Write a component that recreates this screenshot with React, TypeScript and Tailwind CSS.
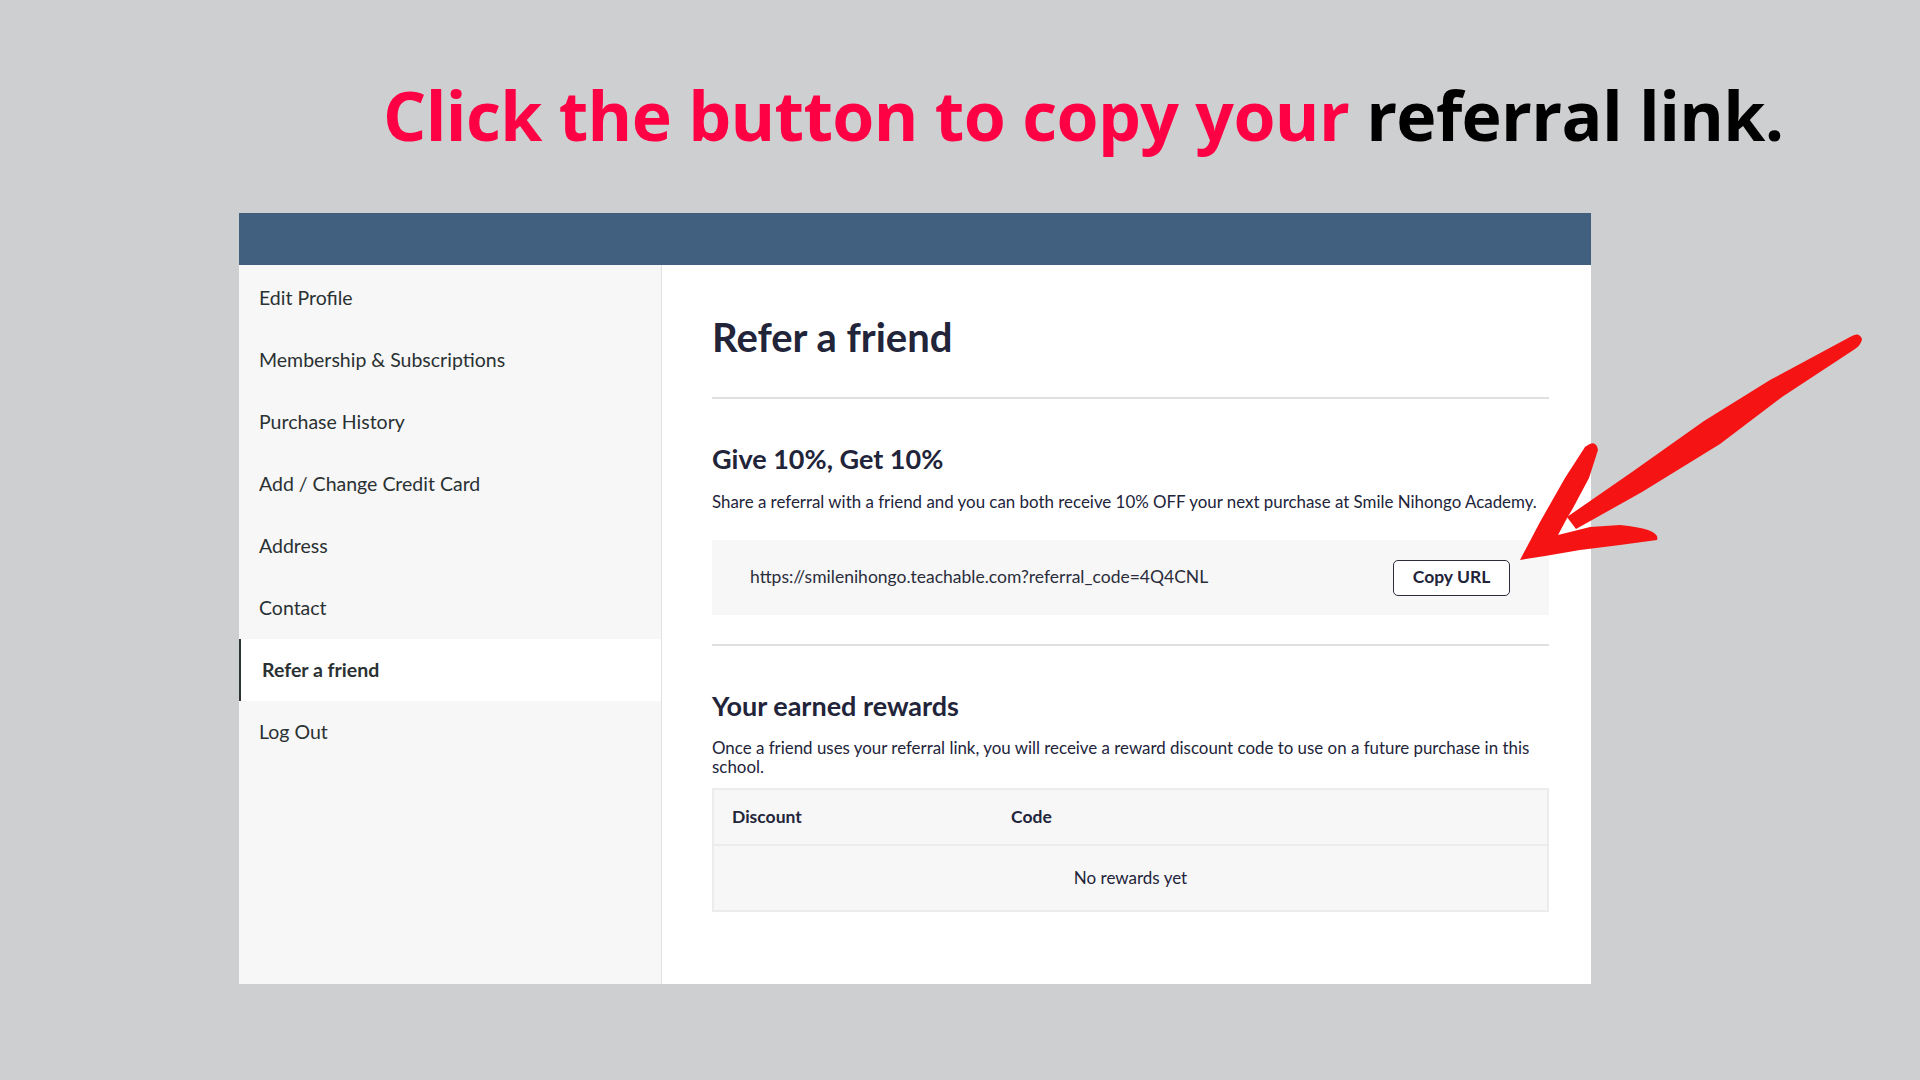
import React from 'react';

const NAV = [
  'Edit Profile',
  'Membership & Subscriptions',
  'Purchase History',
  'Add / Change Credit Card',
  'Address',
  'Contact',
  'Refer a friend',
  'Log Out',
];

function Arrow() {
  return (
    <svg className="pointer-events-none absolute inset-0" width="1920" height="1080" viewBox="0 0 1920 1080">
      <path
        d="M1850 337 Q1859 331 1862 339 Q1861 345 1855 349 L1782 397 L1720 444 L1642 492 L1576 529 L1567 517 L1632 472 L1704 421 L1770 380 Z"
        fill="#f51313"
      />
      <path
        d="M1520 560 L1540 522 L1565 478 L1585 447 Q1596 438 1598 450 L1589 478 L1573 508 L1566 520 L1558 535 L1590 527 L1620 525 Q1661 529 1657 540 L1620 545 L1580 550 L1545 556 Z"
        fill="#f51313"
      />
    </svg>
  );
}

export default function App() {
  return (
    <div className="relative h-[1080px] w-[1920px] overflow-hidden bg-[#cecfd1] font-['Lato',sans-serif]">
      <div className="h-[213px] pl-[383px] pt-[70px]">
        <h1 className="font-['Open_Sans',sans-serif] text-[68px] font-bold leading-[90px] tracking-[-0.65px]">
          <span className="text-[#fe0144]">Click the button to copy your </span>
          <span className="text-black">referral link.</span>
        </h1>
      </div>

      <div className="ml-[239px] flex h-[771px] w-[1352px] flex-col">
        <div className="h-[52px] bg-[#41607f]" />
        <div className="flex flex-1">
          <aside className="w-[423px] border-r border-[#e2e2e2] bg-[#f7f7f7] pt-[2px]">
            {NAV.map((item) => {
              const active = item === 'Refer a friend';
              return (
                <div
                  key={item}
                  className={
                    active
                      ? 'flex h-[62px] items-center border-l-2 border-[#2d3436] bg-white pl-[21px] text-[19.5px] font-bold text-[#2a3133]'
                      : 'flex h-[62px] items-center pl-[20px] text-[19.5px] text-[#2a3133]'
                  }
                >
                  {item}
                </div>
              );
            })}
          </aside>

          <main className="flex-1 bg-white pl-[50px] pr-[42px] text-[#22243a]">
            <h2 className="pt-[48px] text-[40px] font-bold leading-[48px]">Refer a friend</h2>
            <div className="mt-[36px] h-[2px] bg-[#e0e0e0]" />

            <h3 className="mt-[44px] text-[27px] font-bold leading-[32px]">Give 10%, Get 10%</h3>
            <p className="mt-[17px] text-[16.9px] leading-[20px]">
              Share a referral with a friend and you can both receive 10% OFF your next purchase at Smile Nihongo Academy.
            </p>
            <div className="mt-[28px] flex h-[75px] items-center justify-between bg-[#f7f7f7] pl-[38px] pr-[39px]">
              <span className="text-[17.5px] text-[#2b2d3c]">https://smilenihongo.teachable.com?referral_code=4Q4CNL</span>
              <button className="h-[36px] w-[117px] rounded-[5px] border border-[#2b2d3c] bg-white text-[17.5px] font-bold text-[#22243a]">
                Copy URL
              </button>
            </div>
            <div className="mt-[29px] h-[2px] bg-[#e0e0e0]" />

            <h3 className="mt-[44px] text-[27px] font-bold leading-[32px]">Your earned rewards</h3>
            <p className="mt-[16px] text-[16.9px] leading-[19px]">
              Once a friend uses your referral link, you will receive a reward discount code to use on a future purchase in this school.
            </p>
            <div className="mt-[12px] border-2 border-[#ececec] bg-[#f7f7f7]">
              <div className="flex h-[56px] items-center border-b-2 border-[#ececec] text-[17.5px] font-bold">
                <span className="w-[297px] pl-[18px]">Discount</span>
                <span>Code</span>
              </div>
              <div className="flex h-[64px] items-center justify-center text-[17px]">No rewards yet</div>
            </div>
          </main>
        </div>
      </div>

      <Arrow />
    </div>
  );
}
